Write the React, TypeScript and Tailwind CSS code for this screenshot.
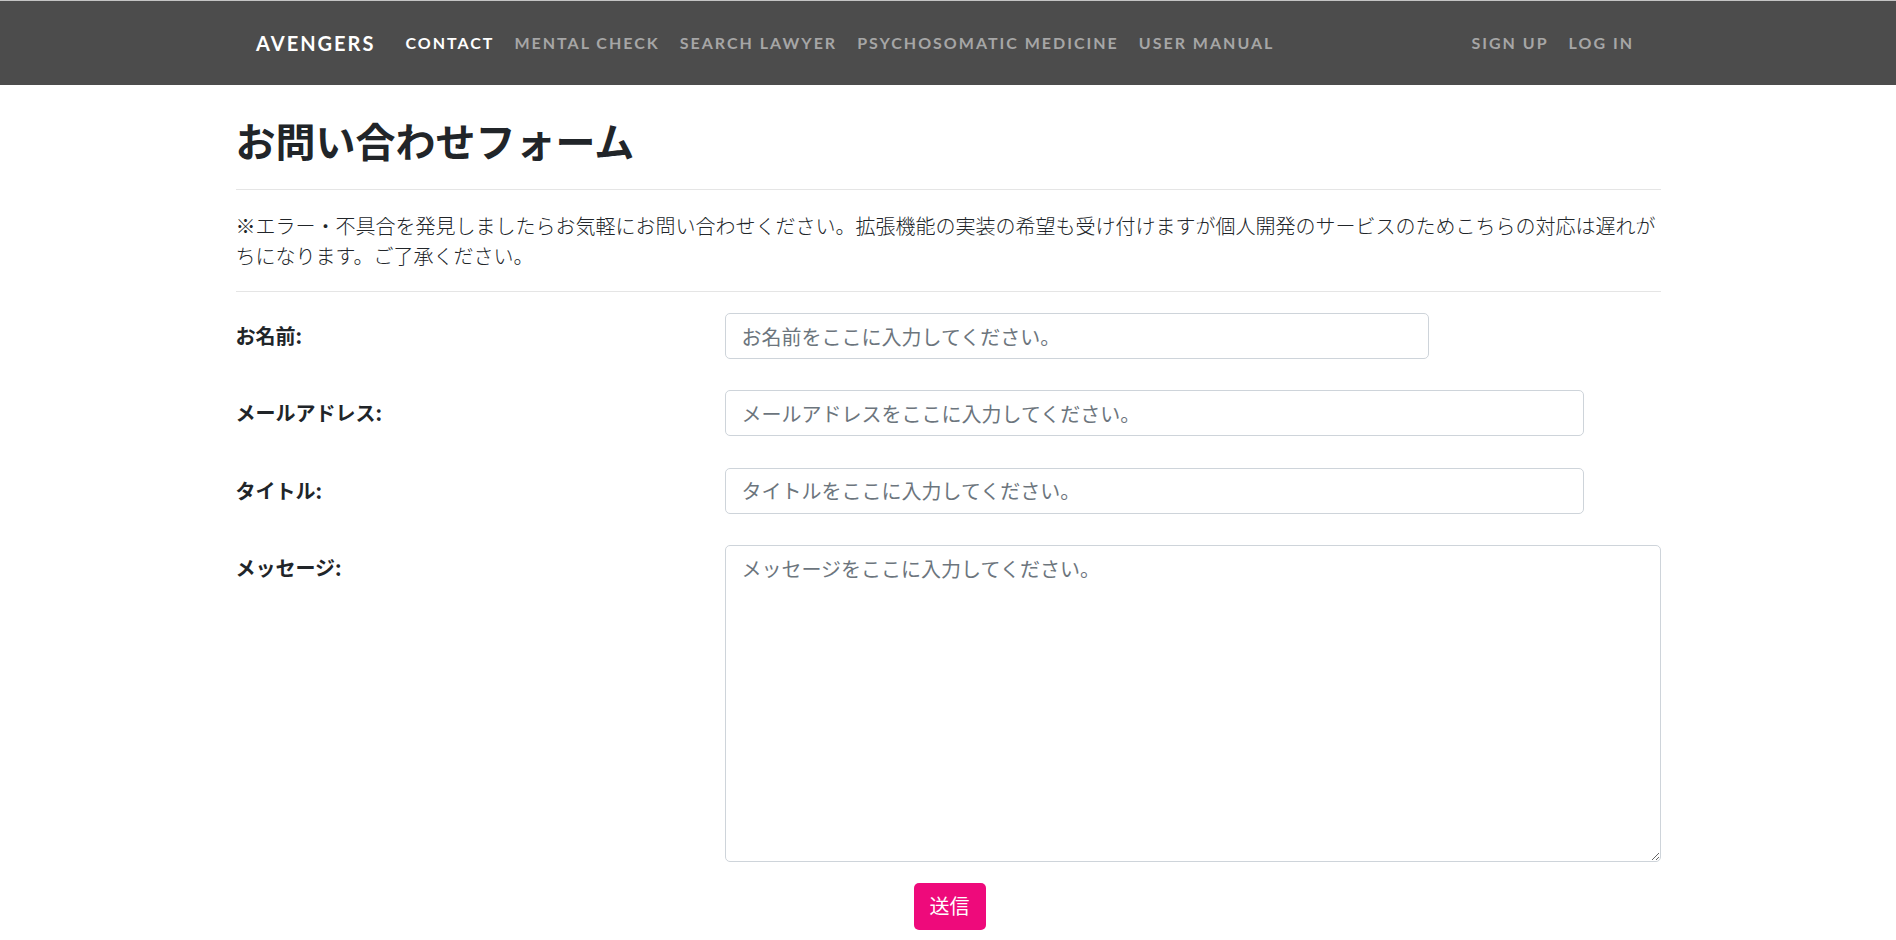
const navItems = [
  { label: 'CONTACT', active: true },
  { label: 'MENTAL CHECK' },
  { label: 'SEARCH LAWYER' },
  { label: 'PSYCHOSOMATIC MEDICINE' },
  { label: 'USER MANUAL' },
]

const fields = [
  { label: 'お名前:', placeholder: 'お名前をここに入力してください。', width: 'w-[704px]' },
  { label: 'メールアドレス:', placeholder: 'メールアドレスをここに入力してください。', width: 'w-[859px]' },
  { label: 'タイトル:', placeholder: 'タイトルをここに入力してください。', width: 'w-[859px]' },
]

const jp = "font-['Noto_Sans_CJK_JP',sans-serif]"

function NavBar() {
  return (
    <nav className="h-[85px] border-t border-[#c4c4c4] bg-[#4c4c4c] font-['Lato',sans-serif] font-bold uppercase">
      <div className="mx-auto flex h-full w-[1384px] items-center">
        <a className="mr-[20px] text-[20px] tracking-[2px] text-white">AVENGERS</a>
        <ul className="flex items-center text-[16px] tracking-[2px]">
          {navItems.map((item) => (
            <li key={item.label}>
              <a className={`px-[10px] ${item.active ? 'text-white' : 'text-[#a6a6a6]'}`}>{item.label}</a>
            </li>
          ))}
        </ul>
        <ul className="-mr-[4px] ml-auto flex items-center text-[16px] tracking-[2px] text-[#a6a6a6]">
          <li><a className="px-[10px]">SIGN UP</a></li>
          <li><a className="px-[10px]">LOG IN</a></li>
        </ul>
      </div>
    </nav>
  )
}

export default function App() {
  return (
    <div className={`min-h-screen bg-white text-[#212529] ${jp}`}>
      <NavBar />
      <main className="mx-auto w-[1425px]">
        <h1 className="mt-[31px] text-[40px] font-bold leading-[48px]">お問い合わせフォーム</h1>
        <hr className="mt-[25px] border-t border-[#e5e5e5]" />
        <p className="mt-[21px] text-[20px] font-light leading-[30px]">
          ※エラー・不具合を発見しましたらお気軽にお問い合わせください。拡張機能の実装の希望も受け付けますが個人開発のサービスのためこちらの対応は遅れがちになります。ご了承ください。
        </p>
        <hr className="mt-[20px] border-t border-[#e5e5e5]" />

        <form className="mt-[21px]" onSubmit={(e) => e.preventDefault()}>
          {fields.map((f) => (
            <div key={f.label} className="mb-[31.33px] grid grid-cols-[489px_1fr]">
              <label className="flex h-[46px] items-center text-[20px] font-bold">{f.label}</label>
              <input
                type="text"
                placeholder={f.placeholder}
                className={`${f.width} h-[46px] rounded-[5px] border border-[#ced4da] px-4 text-[20px] outline-none placeholder:text-[#6c757d]`}
              />
            </div>
          ))}
          <div className="grid grid-cols-[489px_1fr]">
            <label className="flex h-[46px] items-center text-[20px] font-bold">メッセージ:</label>
            <textarea
              placeholder="メッセージをここに入力してください。"
              className="block h-[317px] w-full rounded-[5px] border border-[#ced4da] px-4 py-2 text-[20px] leading-[30px] outline-none placeholder:text-[#6c757d]"
            />
          </div>
          <div className="mt-[21px] flex justify-center pl-[3px]">
            <button
              type="submit"
              className="h-[47px] rounded-[5px] bg-[#ee0a7b] px-4 text-[20px] leading-[30px] text-white"
            >
              送信
            </button>
          </div>
        </form>
      </main>
    </div>
  )
}
